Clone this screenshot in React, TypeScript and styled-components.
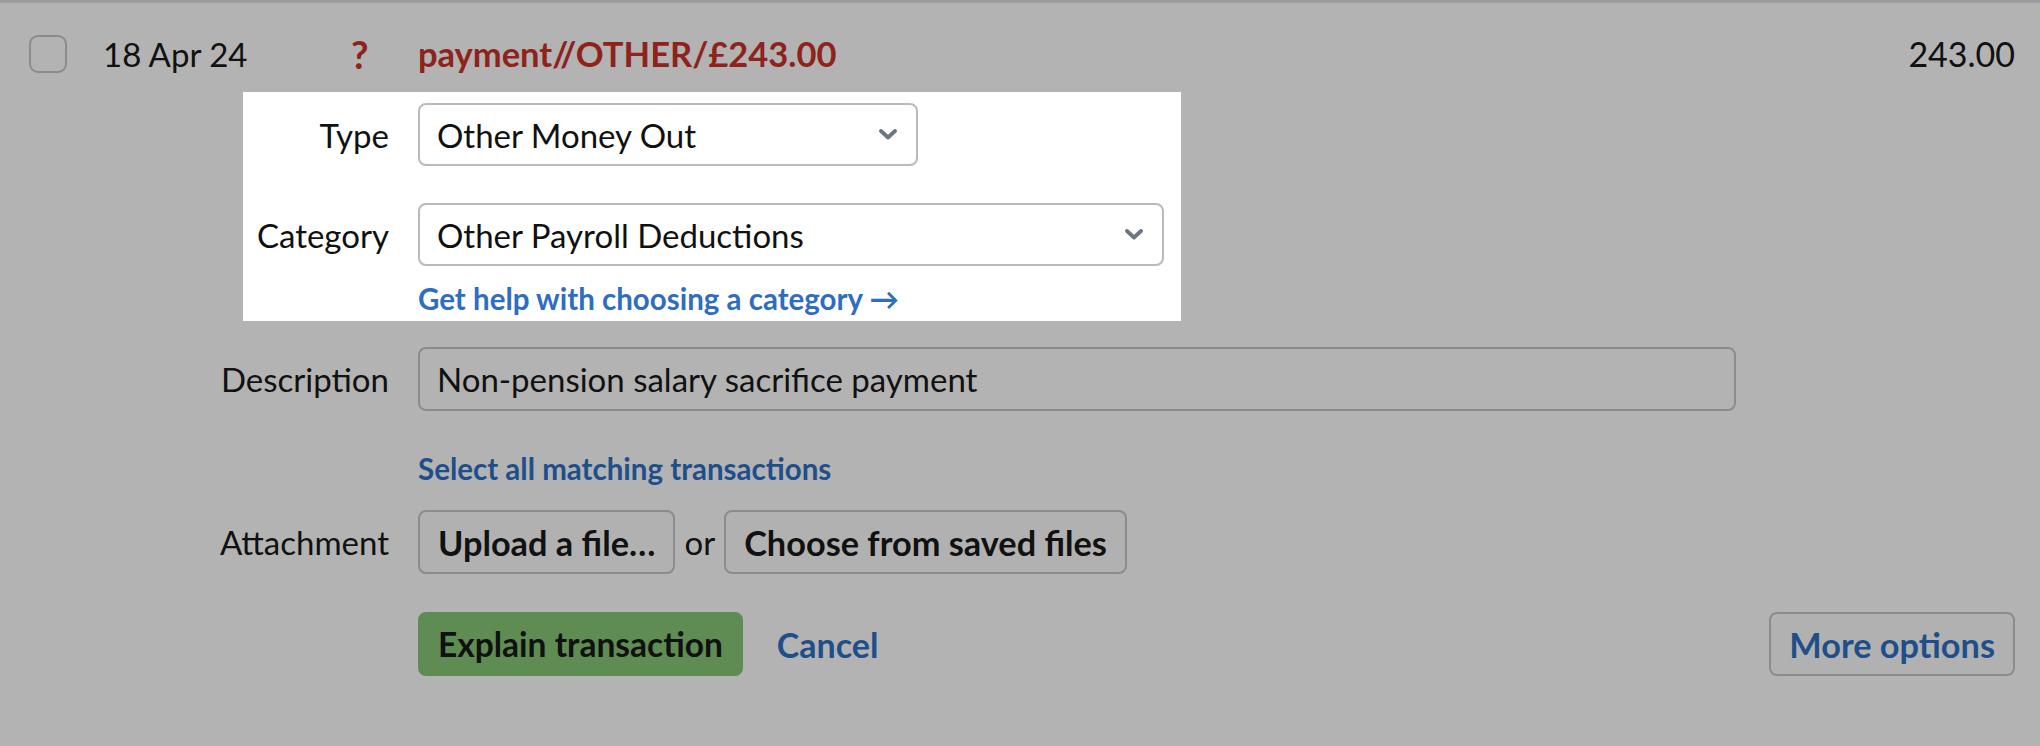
import styled, { createGlobalStyle } from 'styled-components'

const GlobalStyle = createGlobalStyle`
  body {
    margin: 0;
    background: #b3b3b3;
    font-family: Lato, "Liberation Sans", sans-serif;
    color: #111;
  }
`

const Page = styled.main`
  display: flex;
  flex-direction: column;
  border-top: 3px solid #9d9da2;
  min-height: 743px;
`

const Header = styled.header`
  display: flex;
  align-items: center;
  padding: 32px 25px 0 29px;
  height: 37px;
  font-size: 33px;
`

const Check = styled.span`
  width: 34px;
  height: 34px;
  border: 2px solid #8a8c8f;
  border-radius: 9px;
  margin-right: 36px;
  flex-shrink: 0;
`

const DateCell = styled.span`
  width: 248px;
`

const Unknown = styled.span`
  width: 67px;
  color: #8e231c;
  font-size: 38px;
  font-weight: 700;
`

const Payee = styled.span`
  color: #8e231c;
  font-weight: 700;
  font-size: 34.5px;
`

const Amount = styled.span`
  margin-left: auto;
  font-size: 34px;
`

const Form = styled.section`
  display: flex;
  flex-direction: column;
  margin-top: 20px;
  padding-right: 25px;
`

const Spotlight = styled.div`
  margin-left: 243px;
  width: 938px;
  background: #fff;
  padding: 11px 0 4px;
  display: flex;
  flex-direction: column;
`

const Row = styled.div<{ $label: number; $gap?: number }>`
  display: grid;
  grid-template-columns: ${p => p.$label}px 1fr;
  column-gap: 29px;
  align-items: center;
  margin-top: ${p => p.$gap ?? 0}px;
  font-size: 33px;
`

const Label = styled.label`
  text-align: right;
`

const Select = styled.div<{ $width: number }>`
  width: ${p => p.$width}px;
  height: 63px;
  box-sizing: border-box;
  border: 2px solid #b7bbbf;
  border-radius: 8px;
  display: flex;
  align-items: center;
  justify-content: space-between;
  padding: 0 19px 0 17px;
  background: #fff;
`

const Input = styled.div<{ $width: number }>`
  width: ${p => p.$width}px;
  height: 64px;
  box-sizing: border-box;
  border: 2px solid #8a8c8f;
  border-radius: 8px;
  display: flex;
  align-items: center;
  padding-left: 17px;
`

const Link = styled.a<{ $dim?: boolean }>`
  color: ${p => (p.$dim ? '#1f4f8b' : '#2e6dbf')};
  font-weight: 700;
  font-size: 29.5px;
  line-height: 36px;
  text-decoration: none;
`

const Controls = styled.div`
  display: flex;
  align-items: center;
`

const Button = styled.button<{ $primary?: boolean; $link?: boolean }>`
  height: 64px;
  box-sizing: border-box;
  border-radius: 8px;
  font-family: inherit;
  font-size: ${p => (p.$primary ? 33.5 : 34.3)}px;
  font-weight: 700;
  padding: 0 18px;
  color: ${p => (p.$link ? '#1f4f8b' : '#111')};
  background: ${p => (p.$primary ? '#5e8c52' : '#b1b1b1')};
  border: 2px solid ${p => (p.$primary ? '#5e8c52' : '#8a8c8f')};
`

const Or = styled.span`
  margin: 0 9px;
  font-size: 33px;
`

const CancelLink = styled.a`
  color: #1f4f8b;
  font-weight: 700;
  font-size: 34px;
  margin-left: 34px;
`

const Spacer = styled.span`
  flex: 1;
`

function Chevron() {
  return (
    <svg width="18" height="11" viewBox="0 0 18 11">
      <polyline points="2,2 9,8.5 16,2" fill="none" stroke="#6b7680" strokeWidth="3.8" strokeLinecap="round" strokeLinejoin="round" />
    </svg>
  )
}

export default function App() {
  return (
    <Page>
      <GlobalStyle />
      <Header>
        <Check />
        <DateCell>18 Apr 24</DateCell>
        <Unknown>?</Unknown>
        <Payee>payment//OTHER/£243.00</Payee>
        <Amount>243.00</Amount>
      </Header>
      <Form>
        <Spotlight>
          <Row $label={146}>
            <Label>Type</Label>
            <Select $width={500}>
              Other Money Out
              <Chevron />
            </Select>
          </Row>
          <Row $label={146} $gap={37}>
            <Label>Category</Label>
            <Select $width={746}>
              Other Payroll Deductions
              <Chevron />
            </Select>
          </Row>
          <Row $label={146} $gap={15}>
            <span />
            <Link href="#">Get help with choosing a category →</Link>
          </Row>
        </Spotlight>
        <Row $label={389} $gap={26}>
          <Label>Description</Label>
          <Input $width={1318}>Non-pension salary sacrifice payment</Input>
        </Row>
        <Row $label={389} $gap={40}>
          <span />
          <Link href="#" $dim>Select all matching transactions</Link>
        </Row>
        <Row $label={389} $gap={23}>
          <Label>Attachment</Label>
          <Controls>
            <Button>Upload a file…</Button>
            <Or>or</Or>
            <Button>Choose from saved files</Button>
          </Controls>
        </Row>
        <Row $label={389} $gap={38}>
          <span />
          <Controls>
            <Button $primary>Explain transaction</Button>
            <CancelLink>Cancel</CancelLink>
            <Spacer />
            <Button $link>More options</Button>
          </Controls>
        </Row>
      </Form>
    </Page>
  )
}
